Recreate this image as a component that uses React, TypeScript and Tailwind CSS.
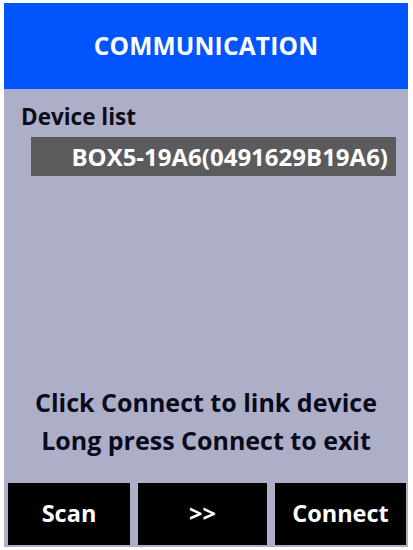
import React from 'react';

export default function App() {
  return (
    <div
      className="w-[413px] h-[550px] bg-white pt-[3px] pl-[4px] pr-[5px] pb-[3px]"
      style={{ fontFamily: '"Open Sans", "Noto Sans", sans-serif' }}
    >
      <div className="flex flex-col h-full bg-[#adafc9]">
        {/* header */}
        <div className="h-[86px] bg-[#0254fd] flex items-center justify-center">
          <span className="text-white font-bold text-[24.5px] tracking-[0.2px]">COMMUNICATION</span>
        </div>

        {/* device list */}
        <div className="pt-[13px] pl-[17px]">
          <div className="text-[#0c0c16] font-bold text-[22.5px] leading-[30px]">Device list</div>
        </div>
        <div className="mt-[5px] ml-[27px] mr-[12px] h-[39px] bg-[#5b5b5e] flex items-center justify-end pr-[8px]">
          <span className="text-white font-bold text-[24px] leading-[30px]">BOX5-19A6(0491629B19A6)</span>
        </div>

        <div className="flex-1" />

        {/* hint */}
        <div className="text-center text-[#0a0a1a] font-bold text-[25px] leading-[38px] mb-[24px]">
          <div>Click Connect to link device</div>
          <div>Long press Connect to exit</div>
        </div>

        {/* buttons */}
        <div className="flex gap-[8px] pl-[4px] pr-[2px] pb-[2px] h-[64px]">
          <button className="w-[122px] bg-black text-white font-bold text-[23.5px]">Scan</button>
          <button className="w-[129px] bg-black text-white font-bold text-[23.5px]">&gt;&gt;</button>
          <button className="flex-1 bg-black text-white font-bold text-[23.5px]">Connect</button>
        </div>
      </div>
    </div>
  );
}
